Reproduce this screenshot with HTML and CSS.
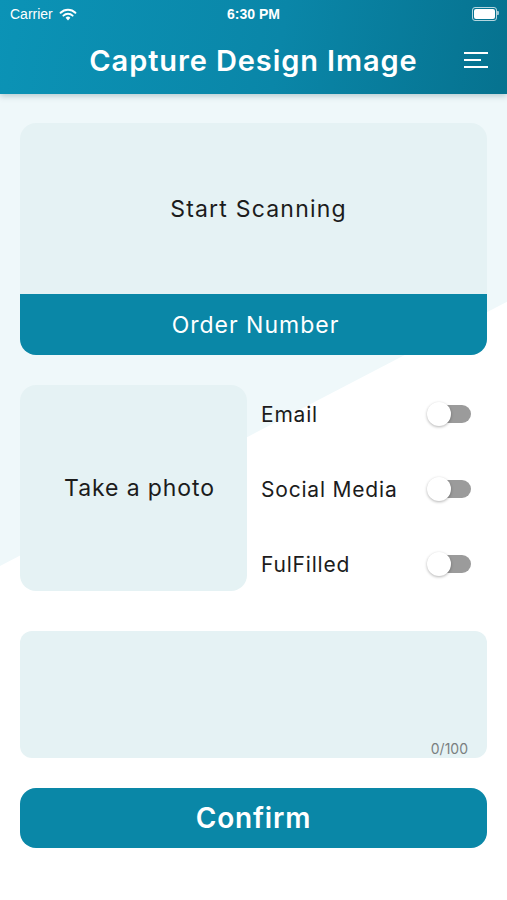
FILE: index.html
```html
<!DOCTYPE html>
<html lang="en">
<head>
  <meta charset="UTF-8" />
  <meta name="viewport" content="width=device-width, initial-scale=1.0"/>
  <title>Capture Design Image</title>
  <link rel="stylesheet" href="styles.css">
</head>
<body>
  <header class="topbar">
    <div class="status">
      <span class="carrier">Carrier
        <svg class="wifi" width="18" height="13" viewBox="0 0 18 13">
          <path d="M9 12.5 L6.6 9.8 A3.4 3.4 0 0 1 11.4 9.8 Z" fill="#fff"/>
          <path d="M4.4 7.6 A6.5 6.5 0 0 1 13.6 7.6" stroke="#fff" stroke-width="2" fill="none" stroke-linecap="round"/>
          <path d="M1.6 4.8 A10.4 10.4 0 0 1 16.4 4.8" stroke="#fff" stroke-width="2" fill="none" stroke-linecap="round"/>
        </svg>
      </span>
      <span class="time">6:30 PM</span>
      <span class="battery"><span class="battery-level"></span></span>
    </div>
    <div class="titlebar">
      <h1>Capture Design Image</h1>
      <svg class="menu" width="24" height="18" viewBox="0 0 24 18">
        <rect x="0" y="1" width="24" height="2" fill="#fff"/>
        <rect x="0" y="8" width="17" height="2" fill="#fff"/>
        <rect x="0" y="15" width="24" height="2" fill="#fff"/>
      </svg>
    </div>
  </header>

  <div class="backdrop"></div>

  <main class="content">
    <!-- Scan card -->
    <section class="scan-card">
      <div class="scan-area">Start Scanning</div>
      <div class="order-band">Order Number</div>
    </section>

    <!-- Photo and switches -->
    <section class="photo-row">
      <div class="photo-box">Take a photo</div>
      <div class="switches">
        <div class="switch-row">
          <span>Email</span>
          <span class="toggle"><span class="knob"></span></span>
        </div>
        <div class="switch-row">
          <span>Social Media</span>
          <span class="toggle"><span class="knob"></span></span>
        </div>
        <div class="switch-row">
          <span>FulFilled</span>
          <span class="toggle"><span class="knob"></span></span>
        </div>
      </div>
    </section>

    <!-- Notes -->
    <section class="notes">
      <span class="counter">0/100</span>
    </section>

    <button class="confirm">Confirm</button>
  </main>
</body>
</html>
```

FILE: styles.css
```css
body {
  font-family: Inter, "Noto Sans", sans-serif;
  margin: 0;
  background: #fff;
  color: #1c1c1c;
  min-height: 100vh;
  position: relative;
}

.topbar {
  height: 94px;
  background: linear-gradient(100deg, #0b93b6 0%, #0a86a8 55%, #06728f 100%);
  color: #fff;
  box-shadow: 0 2px 6px rgba(0, 60, 80, 0.25);
  position: relative;
  z-index: 2;
}

.status {
  height: 28px;
  display: flex;
  align-items: center;
  justify-content: space-between;
  padding: 0 10px;
  font-size: 14px;
  position: relative;
}

.carrier {
  display: flex;
  align-items: center;
  gap: 6px;
  font-family: "Liberation Sans", sans-serif;
}

.time {
  position: absolute;
  left: 0;
  right: 0;
  text-align: center;
  font-family: "Liberation Sans", sans-serif;
  font-weight: bold;
  font-size: 14px;
}

.battery {
  width: 21px;
  height: 10px;
  border: 1px solid rgba(255, 255, 255, 0.7);
  border-radius: 3px;
  padding: 1px;
  position: relative;
}

.battery::after {
  content: "";
  position: absolute;
  right: -3px;
  top: 3px;
  width: 2px;
  height: 4px;
  background: rgba(255, 255, 255, 0.6);
  border-radius: 0 1px 1px 0;
}

.battery-level {
  display: block;
  height: 100%;
  background: #fff;
  border-radius: 2px;
}

.titlebar {
  height: 66px;
  display: flex;
  align-items: center;
  justify-content: center;
  position: relative;
}

.titlebar h1 {
  margin: 0;
  font-size: 29px;
  font-weight: 600;
  letter-spacing: 0.9px;
  margin-bottom: 1px;
}

.menu {
  position: absolute;
  right: 19px;
  top: 23px;
}

.backdrop {
  position: absolute;
  left: 0;
  right: 0;
  top: 94px;
  height: 472px;
  background: #eff8fa;
  clip-path: polygon(0 0, 100% 0, 100% 44%, 0 100%);
  z-index: 0;
}

.content {
  position: relative;
  z-index: 1;
  padding: 29px 20px 40px;
  display: flex;
  flex-direction: column;
}

.scan-card {
  height: 232px;
  border-radius: 16px;
  overflow: hidden;
  display: flex;
  flex-direction: column;
}

.scan-area {
  flex: 1;
  background: #e5f2f4;
  display: flex;
  align-items: center;
  justify-content: center;
  font-size: 23px;
  letter-spacing: 1.2px;
  padding: 0 0 0 10px;
}

.order-band {
  height: 61px;
  background: #0a87a7;
  color: #fff;
  display: flex;
  align-items: center;
  justify-content: center;
  font-size: 23px;
  letter-spacing: 1px;
  padding-left: 4px;
}

.photo-row {
  margin-top: 30px;
  display: flex;
  gap: 14px;
  height: 206px;
}

.photo-box {
  width: 227px;
  background: #e5f2f4;
  border-radius: 16px;
  display: flex;
  align-items: center;
  justify-content: center;
  font-size: 23px;
  letter-spacing: 0.9px;
  padding-left: 12px;
  box-sizing: border-box;
}

.switches {
  flex: 1;
  display: flex;
  flex-direction: column;
  justify-content: center;
  gap: 46px;
  padding-right: 16px;
  padding-top: 2px;
}

.switch-row {
  display: flex;
  align-items: center;
  justify-content: space-between;
  font-size: 21px;
  letter-spacing: 0.8px;
  height: 29px;
}

.toggle {
  width: 38px;
  height: 18px;
  background: #9b9b9b;
  border-radius: 9px;
  position: relative;
}

.knob {
  position: absolute;
  left: -6px;
  top: -3px;
  width: 24px;
  height: 24px;
  border-radius: 50%;
  background: #fff;
  box-shadow: 0 1px 3px rgba(0, 0, 0, 0.3);
}

.notes {
  margin-top: 40px;
  height: 126px;
  background: #e5f2f4;
  border-radius: 12px;
  display: flex;
  align-items: flex-end;
  justify-content: flex-end;
  padding: 0 19px 1px 0;
}

.counter {
  font-size: 14px;
  color: #7a7f80;
}

.confirm {
  margin-top: 30px;
  height: 60px;
  border: none;
  border-radius: 16px;
  background: #0a87a7;
  color: #fff;
  font-family: inherit;
  font-size: 28px;
  font-weight: 600;
  letter-spacing: 0.8px;
}
```
